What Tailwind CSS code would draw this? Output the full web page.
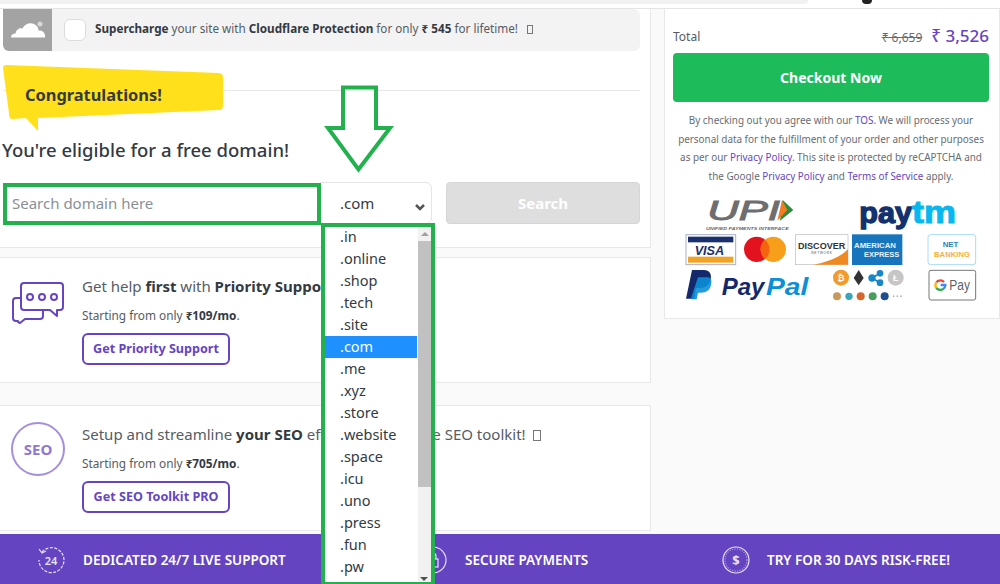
<!DOCTYPE html>
<html>
<head>
<meta charset="utf-8">
<script src="https://cdn.jsdelivr.net/npm/@tailwindcss/browser@4"></script>
</head>
<body class="m-0 bg-[#fafafa]">
<div class="relative w-[1000px] h-[584px] overflow-hidden bg-[#fafafa] text-[#333a42] font-['Noto_Sans',sans-serif]">

  <!-- browser strip -->
  <div class="h-[9px] bg-white border-b border-[#e4e4e4] relative">
    <div class="w-[808px] h-[4px] bg-[#f1f1f1] rounded-br-lg"></div>
    <div class="absolute left-[862px] top-0 w-[10px] h-[4px] bg-[#222] rounded-b-sm"></div>
  </div>

  <div class="flex items-start h-[525px]">
    <!-- left column -->
    <div class="w-[651px] shrink-0">
      <div class="h-[239px] bg-white border-r border-b border-[#e8e8e8] pl-[3px] pr-[10px] flex flex-col">
        <div class="h-[42px] shrink-0 bg-[#f3f3f3] rounded-md flex items-center">
          <div class="w-[49px] h-[42px] bg-[#a3a3a3] rounded-bl-md flex items-center justify-center">
            <svg width="36" height="20" viewBox="0 0 36 20"><path d="M1 17.500c0-2.500 2-4 4.500-4 .5-4 4-6 7-5 2-4.500 7-6.500 11.500-4.500 3 1.300 4.500 4 4.500 6.500 3-.5 6 1.500 6.500 4.500.3 1.500 0 2.500-.5 2.500H1.500c-.3 0-.5 0-.5 0z" fill="#fff"/><circle cx="30" cy="4" r="2.500" fill="#d8d8d8"/></svg>
          </div>
          <div class="w-[22px] h-[22px] ml-[12px] bg-white border border-[#dcdcdc] rounded-md"></div>
          <p class="ml-[9px] -mt-[2px] text-[11.700px] text-[#555c63] whitespace-nowrap"><b class="text-[#333a42] font-bold">Supercharge</b> your site with <b class="text-[#333a42] font-bold">Cloudflare Protection</b> for only <b class="text-[#333a42] font-bold">₹ 545</b> for lifetime!<span class="inline-block align-[-1px] w-[6px] h-[9px] ml-[9px] border border-[#777]"></span></p>
        </div>
        <div class="h-[40px] shrink-0 border-b border-[#e8e8e8]"></div>
        <h2 class="mt-[45px] text-[18.500px] leading-[28px] font-medium text-[#333a42] -ml-[1px]">You're eligible for a free domain!</h2>
        <div class="mt-[18px] flex h-[42px]">
          <div class="w-[317px] pl-[9px] flex items-center text-[15px] text-[#8a9097] bg-white">Search domain here</div>
          <div class="w-[112px] border border-[#e6e6e6] rounded-r-md flex items-center pl-[19px] text-[15px] relative">.com
            <svg class="absolute right-[6px] top-[21px]" width="10" height="7" viewBox="0 0 10 7"><path d="M1 1l4 4 4-4" fill="none" stroke="#555" stroke-width="2.500"/></svg>
          </div>
          <div class="ml-[14px] w-[194px] bg-[#dedede] border border-[#d6d6d6] rounded-sm flex items-center justify-center text-white text-[15px] font-bold">Search</div>
        </div>
      </div>

      <div class="mt-[9px] h-[126px] bg-white border-y border-r border-[#e8e8e8] flex items-start">
        <div class="w-[82px] shrink-0 pl-[12px] pt-[23px]">
          <svg width="53" height="43" viewBox="0 0 53 43" fill="none" stroke="#6545c4" stroke-width="2" stroke-linejoin="round">
            <path d="M12 2h36a3 3 0 0 1 3 3v21a3 3 0 0 1-3 3h-3v6l-7-6H12a3 3 0 0 1-3-3V5a3 3 0 0 1 3-3z"/>
            <path d="M9 17H4a3 3 0 0 0-3 3v17a3 3 0 0 0 3 3h2v1l2 1 5-4h15a3 3 0 0 0 3-3v-6"/>
            <circle cx="18" cy="16" r="3"/><circle cx="30" cy="16" r="3"/><circle cx="42" cy="16" r="3"/>
          </svg>
        </div>
        <div class="pt-[16px]">
          <p class="text-[15px] leading-[24px] text-[#555c63] whitespace-nowrap">Get help <b class="font-bold text-[#333a42]">first</b> with <b class="font-bold text-[#333a42]">Priority Support</b></p>
          <p class="mt-[8px] text-[11.800px] leading-[18px] text-[#555c63]">Starting from only <b class="font-bold text-[#333a42]">₹109/mo</b>.</p>
          <a class="mt-[9px] inline-flex items-center justify-center w-[148px] h-[32px] border-2 border-[#6545c4] rounded-md text-[12.600px] font-bold text-[#6545c4]">Get Priority Support</a>
        </div>
      </div>

      <div class="mt-[22px] h-[126px] bg-white border-y border-r border-[#e8e8e8] flex items-start">
        <div class="w-[82px] shrink-0 pl-[11px] pt-[16px]">
          <div class="w-[54px] h-[54px] rounded-full border-2 border-[#a48fdc] flex items-center justify-center text-[15px] font-bold text-[#8f78d4]">SEO</div>
        </div>
        <div class="pt-[16px]">
          <p class="text-[15px] leading-[24px] text-[#555c63] whitespace-nowrap">Setup and streamline <b class="font-bold text-[#333a42]">your SEO</b> efforts with <span class="ml-[26px]">the SEO toolkit!</span><span class="inline-block align-[-1px] w-[8px] h-[11px] ml-[7px] border border-[#777]"></span></p>
          <p class="mt-[8px] text-[11.800px] leading-[18px] text-[#555c63]">Starting from only <b class="font-bold text-[#333a42]">₹705/mo</b>.</p>
          <a class="mt-[9px] inline-flex items-center justify-center w-[148px] h-[32px] border-2 border-[#6545c4] rounded-md text-[12.600px] font-bold text-[#6545c4]">Get SEO Toolkit PRO</a>
        </div>
      </div>
    </div>

    <!-- right column -->
    <div class="ml-[13px] w-[336px] h-[310px] bg-white border-x border-b border-[#e8e8e8] pl-[8px] pr-[10px]">
      <div class="h-[44px] flex items-end justify-between pb-[5px]">
        <span class="text-[12px] text-[#555c63] pb-[2px]">Total</span>
        <span class="flex items-baseline"><s class="text-[12px] text-[#666c72] mr-[9px]">₹ 6,659</s><span class="text-[17px] font-medium text-[#6545c4]">₹ 3,526</span></span>
      </div>
      <div class="h-[49px] bg-[#1dbb5a] rounded-sm flex items-center justify-center text-white text-[14px] font-bold">Checkout Now</div>
      <p class="mt-[9px] text-[9.900px] leading-[18.500px] text-center text-[#666c72] whitespace-nowrap">By checking out you agree with our <span class="text-[#6545c4]">TOS</span>. We will process your<br>personal data for the fulfillment of your order and other purposes<br>as per our <span class="text-[#6545c4]">Privacy Policy</span>. This site is protected by reCAPTCHA and<br>the Google <span class="text-[#6545c4]">Privacy Policy</span> and <span class="text-[#6545c4]">Terms of Service</span> apply.</p>
      <svg class="block mt-[5px] -ml-[3px]" width="320" height="112" viewBox="0 0 960 336">
        <!-- UPI -->
        <text x="112" y="91" font-family="Liberation Sans" font-size="84" font-style="italic" font-weight="400" fill="#6e6e70" stroke="#6e6e70" stroke-width="3" textLength="218" lengthAdjust="spacingAndGlyphs">UPI</text>
        <polygon points="338,30 370,60 330,92" fill="#2e8b3d"/><polygon points="336,30 352,60 322,92" fill="#f47b20"/>
        <text x="108" y="121" font-family="Liberation Sans" font-size="13" font-style="italic" font-weight="700" fill="#666" textLength="248" lengthAdjust="spacingAndGlyphs">UNIFIED PAYMENTS INTERFACE</text>
        <!-- paytm -->
        <text x="568" y="98" font-family="Liberation Sans" font-size="88" font-weight="700" fill="#12326f" stroke="#12326f" stroke-width="4" textLength="158" lengthAdjust="spacingAndGlyphs">pay</text>
        <text x="726" y="98" font-family="Liberation Sans" font-size="96" font-weight="700" fill="#07b8f0" stroke="#07b8f0" stroke-width="3" textLength="132" lengthAdjust="spacingAndGlyphs">tm</text>
        <!-- visa -->
        <rect x="48" y="134" width="149" height="90" fill="#fff" stroke="#a8b0c8" stroke-width="3"/>
        <rect x="54" y="140" width="136" height="17" fill="#1a2f6e"/><rect x="54" y="200" width="136" height="18" fill="#f0a325"/>
        <text x="74" y="194" font-family="Liberation Sans" font-size="38" font-style="italic" font-weight="700" fill="#1a2f6e">VISA</text>
        <!-- mastercard -->
        <circle cx="260" cy="178" r="38" fill="#e2121f"/><circle cx="310" cy="178" r="38" fill="#f79e1b"/>
        <path d="M285 149a38 38 0 0 1 0 58a38 38 0 0 1 0-58z" fill="#f4640f"/>
        <!-- discover -->
        <rect x="376" y="134" width="158" height="90" fill="#fff" stroke="#bbb" stroke-width="2"/>
        <path d="M534 178v46H430q70-12 104-46z" fill="#ef8a22"/>
        <text x="384" y="178" font-family="Liberation Sans" font-size="26" font-weight="700" fill="#333" textLength="142" lengthAdjust="spacingAndGlyphs">DISCOVER</text>
        <text x="424" y="192" font-family="Liberation Sans" font-size="10" fill="#555" textLength="62">NETWORK</text>
        <!-- amex -->
        <rect x="546" y="133" width="151" height="92" fill="#1675bc"/>
        <text x="552" y="174" font-family="Liberation Sans" font-size="22" font-weight="700" fill="#e6f2fb" textLength="126" lengthAdjust="spacingAndGlyphs">AMERICAN</text>
        <text x="582" y="201" font-family="Liberation Sans" font-size="22" font-weight="700" fill="#e6f2fb" textLength="106" lengthAdjust="spacingAndGlyphs">EXPRESS</text>
        <!-- net banking -->
        <rect x="774" y="134" width="143" height="90" rx="8" fill="#fff" stroke="#a8dcf5" stroke-width="3"/>
        <text x="818" y="172" font-family="Liberation Sans" font-size="24" font-weight="700" fill="#2c7fbf" textLength="47" lengthAdjust="spacingAndGlyphs">NET</text>
        <text x="792" y="200" font-family="Liberation Sans" font-size="24" font-weight="700" fill="#f6b13b" textLength="108" lengthAdjust="spacingAndGlyphs">BANKING</text>
        <!-- paypal -->
        <path d="M66 240h36c16 0 24 12 20 28-4 18-16 26-34 26H78l-5 32H48z" fill="#13296b"/>
        <path d="M84 262h28c14 0 14 14 10 26-4 14-14 20-30 20h-8l-4 20H62z" fill="#0a8fd8" opacity=".9"/>
        <text x="155" y="314" font-family="Liberation Sans" font-size="72" font-style="italic" font-weight="700" fill="#13296b" textLength="128" lengthAdjust="spacingAndGlyphs">Pay</text>
        <text x="288" y="314" font-family="Liberation Sans" font-size="72" font-style="italic" font-weight="700" fill="#0a8fd8" textLength="127" lengthAdjust="spacingAndGlyphs">Pal</text>
        <!-- crypto -->
        <circle cx="513" cy="263" r="24" fill="#f39a2c"/><text x="513" y="273" text-anchor="middle" font-family="Liberation Sans" font-size="26" font-weight="700" fill="#fff">₿</text>
        <polygon points="566,240 581,264 566,286 551,264" fill="#333"/>
        <circle cx="606" cy="264" r="11" fill="#1787c8"/><circle cx="630" cy="250" r="10" fill="#1787c8"/><circle cx="630" cy="278" r="10" fill="#1787c8"/>
        <path d="M606 264L630 250M606 264L630 278" stroke="#1787c8" stroke-width="5"/>
        <circle cx="677" cy="263" r="24" fill="#c6c6c6"/><text x="677" y="273" text-anchor="middle" font-family="Liberation Sans" font-size="26" font-weight="700" fill="#fff">Ł</text>
        <circle cx="501" cy="319" r="12" fill="#c79a5a"/><circle cx="537" cy="319" r="11" fill="#38a6b8"/><circle cx="572" cy="319" r="12" fill="#d9652b"/><circle cx="608" cy="319" r="12" fill="#4a9e5c"/><circle cx="644" cy="319" r="12" fill="#1f4f8f"/>
        <circle cx="671" cy="319" r="3" fill="#bbb"/><circle cx="682" cy="319" r="3" fill="#bbb"/><circle cx="693" cy="319" r="3" fill="#bbb"/>
        <!-- gpay -->
        <rect x="777" y="241" width="140" height="89" rx="6" fill="#fff" stroke="#777" stroke-width="3"/>
        <g fill="none" stroke-width="7">
          <path d="M822 276a15 15 0 0 0-23 1" stroke="#ea4335"/>
          <path d="M799 277a15 15 0 0 0 0 17" stroke="#fbbc05"/>
          <path d="M799 294a15 15 0 0 0 23 1" stroke="#34a853"/>
          <path d="M822 295a15 15 0 0 0 4-10h-14" stroke="#4285f4"/>
        </g>
        <text x="838" y="300" font-family="Liberation Sans" font-size="42" fill="#5f6368" textLength="62" lengthAdjust="spacingAndGlyphs">Pay</text>
      </svg>
    </div>
  </div>

  <!-- footer -->
  <div class="h-[50px] pt-[2px] bg-[#6544c1] flex items-center text-white text-[13.500px] font-semibold whitespace-nowrap">
    <div class="w-[382px] flex items-center pl-[37px]">
      <svg width="28" height="28" viewBox="0 0 28 28" fill="none" stroke="#e8e2f8" stroke-width="1.200"><path d="M5 6a12.500 12.500 0 1 1-3 8" stroke-dasharray="3 1.500"/><path d="M2 3l3 4 4-2"/><text x="14" y="18.500" text-anchor="middle" font-family="Noto Sans" font-size="11" fill="#e8e2f8" stroke="none">24</text></svg>
      <span class="ml-[18px]">DEDICATED 24/7 LIVE SUPPORT</span>
    </div>
    <div class="w-[312px] flex items-center pl-[37px]">
      <svg width="28" height="28" viewBox="0 0 28 28" fill="none" stroke="#e8e2f8" stroke-width="1.200"><circle cx="14" cy="14" r="13"/><rect x="9" y="13" width="10" height="8"/><path d="M11 13v-3a3 3 0 0 1 6 0v3"/></svg>
      <span class="ml-[18px]">SECURE PAYMENTS</span>
    </div>
    <div class="flex items-center pl-[28px]">
      <svg width="28" height="28" viewBox="0 0 28 28" fill="none" stroke="#e8e2f8" stroke-width="1.200"><circle cx="14" cy="14" r="13"/><circle cx="14" cy="14" r="11" stroke-dasharray="1 1.500" stroke-width=".8"/><text x="14" y="19" text-anchor="middle" font-family="Noto Sans" font-weight="700" font-size="13" fill="#e8e2f8" stroke="none">$</text></svg>
      <span class="ml-[17px]">TRY FOR 30 DAYS RISK-FREE!</span>
    </div>
  </div>

  <!-- congratulations ribbon -->
  <div class="absolute left-[2px] top-[63px] w-[224px] h-[70px]">
    <svg class="absolute inset-0" width="224" height="70" viewBox="0 0 224 70"><path d="M4 2L217 10q4 .5 4 4v29q0 4-4 4L36 55v13L24 55l-14 1q-2 0-2.500-2L1 5q0-3 3-3z" fill="#ffe01b"/></svg>
    <span class="absolute left-[23px] top-[19px] text-[16.400px] leading-[26px] font-bold text-[#333a42]">Congratulations!</span>
  </div>

  <!-- annotation arrow -->
  <svg class="absolute left-[322px] top-[82px]" width="74" height="94" viewBox="0 0 74 94"><path d="M21 5.500H54V46H68L36.500 87.500L6 46H21Z" fill="none" stroke="#22b14c" stroke-width="4"/></svg>

  <!-- annotation rectangle around the search field -->
  <div class="absolute left-[3px] top-[183px] w-[318px] h-[42px] border-[4px] border-[#22b14c]"></div>

  <!-- opened select list -->
  <div class="absolute left-[321px] top-[223px] w-[114px] h-[361px] border-[4px] border-b-2 border-[#22b14c] bg-white flex">
    <ul class="w-[92px] -mt-[1px] text-[14.500px] text-[#333a42] list-none p-0">
      <li class="h-[22px] leading-[21px] pl-[15px]">.in</li>
      <li class="h-[22px] leading-[21px] pl-[15px]">.online</li>
      <li class="h-[22px] leading-[21px] pl-[15px]">.shop</li>
      <li class="h-[22px] leading-[21px] pl-[15px]">.tech</li>
      <li class="h-[22px] leading-[21px] pl-[15px]">.site</li>
      <li class="h-[22px] leading-[21px] pl-[15px] bg-[#1e90ff] text-white">.com</li>
      <li class="h-[22px] leading-[21px] pl-[15px]">.me</li>
      <li class="h-[22px] leading-[21px] pl-[15px]">.xyz</li>
      <li class="h-[22px] leading-[21px] pl-[15px]">.store</li>
      <li class="h-[22px] leading-[21px] pl-[15px]">.website</li>
      <li class="h-[22px] leading-[21px] pl-[15px]">.space</li>
      <li class="h-[22px] leading-[21px] pl-[15px]">.icu</li>
      <li class="h-[22px] leading-[21px] pl-[15px]">.uno</li>
      <li class="h-[22px] leading-[21px] pl-[15px]">.press</li>
      <li class="h-[22px] leading-[21px] pl-[15px]">.fun</li>
      <li class="h-[22px] leading-[21px] pl-[15px]">.pw</li>
    </ul>
    <div class="ml-[1px] w-[13px] h-full bg-[#f1f1f1] flex flex-col items-center relative">
      <svg class="mt-[5px]" width="8" height="4" viewBox="0 0 8 4"><path d="M0 4L4 0L8 4Z" fill="#a0a0a0"/></svg>
      <div class="mt-[5px] w-full h-[246px] bg-[#c1c1c1]"></div>
      <svg class="absolute bottom-[1px] left-[2px]" width="8" height="4" viewBox="0 0 8 4"><path d="M0 0L4 4L8 0Z" fill="#505050"/></svg>
    </div>
  </div>
</div>
</body>
</html>
